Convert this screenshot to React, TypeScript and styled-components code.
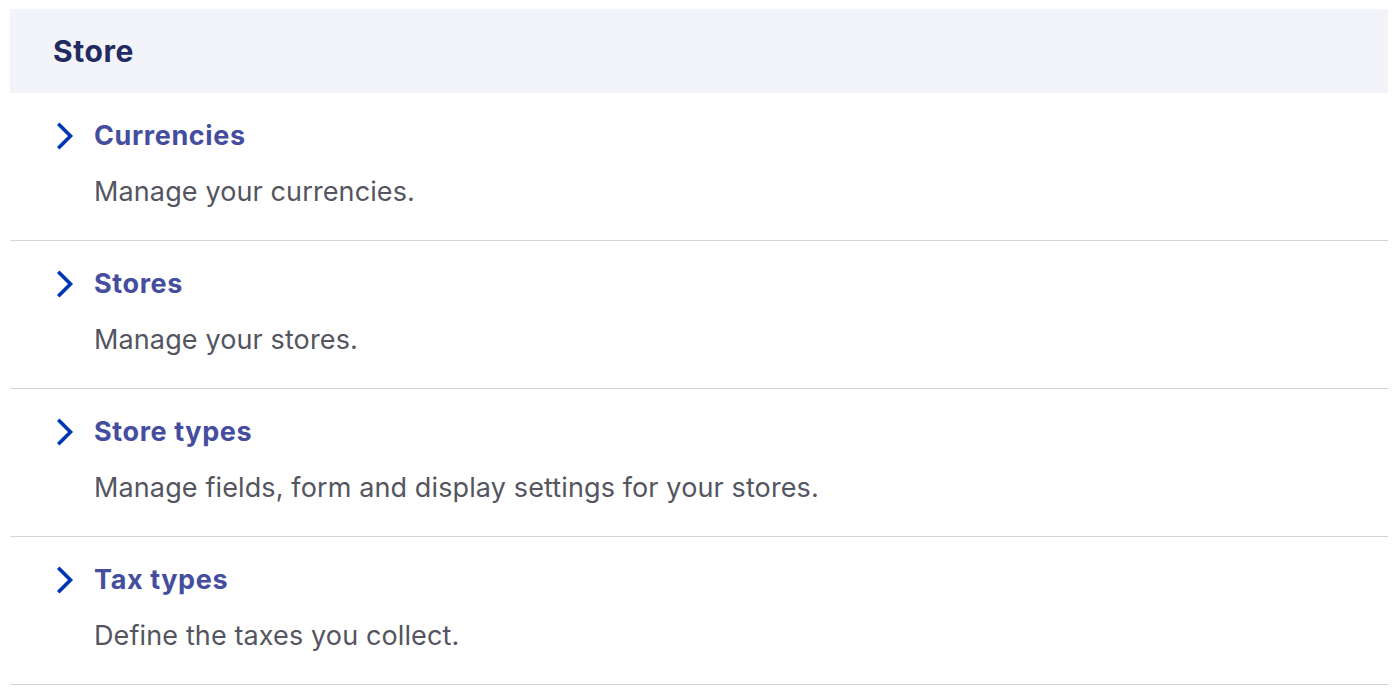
import React from 'react';
import styled, { createGlobalStyle } from 'styled-components';

const GlobalStyle = createGlobalStyle`
  body {
    margin: 0;
    background: #ffffff;
    font-family: Inter, "Noto Sans", sans-serif;
  }
`;

const Panel = styled.section`
  padding: 9px 12px 0 10px;
`;

const Header = styled.header`
  display: flex;
  align-items: center;
  height: 84px;
  padding-left: 43px;
  background: #f3f4f9;
`;

const Title = styled.h2`
  margin: 0;
  font-size: 30px;
  font-weight: 700;
  color: #222a62;
  letter-spacing: 0.6px;
`;

const List = styled.ul`
  margin: 0;
  padding: 0;
  list-style: none;
`;

const Item = styled.li`
  display: grid;
  grid-template-columns: 84px 1fr;
  grid-template-rows: auto auto;
  row-gap: 21px;
  padding: 26px 0 30px;
  border-bottom: 1px solid #d3d4d9;
`;

const Chevron = styled.span`
  display: flex;
  align-items: center;
  justify-content: flex-start;
  padding-left: 46px;
  color: #0036b1;
`;

const ItemLink = styled.a`
  font-size: 27px;
  line-height: 34px;
  font-weight: 700;
  color: #454e9e;
  text-decoration: none;
  letter-spacing: 0.6px;
`;

const Description = styled.p`
  grid-column: 2;
  margin: 0;
  font-size: 27px;
  line-height: 36px;
  color: #545560;
  letter-spacing: 0.12px;
`;

const items = [
  { title: 'Currencies', text: 'Manage your currencies.' },
  { title: 'Stores', text: 'Manage your stores.' },
  { title: 'Store types', text: 'Manage fields, form and display settings for your stores.' },
  { title: 'Tax types', text: 'Define the taxes you collect.' },
];

function ChevronIcon() {
  return (
    <svg width="20" height="28" viewBox="0 0 20 28" fill="none">
      <path d="M3.5 3 L14.5 14 L3.5 25" stroke="currentColor" strokeWidth="3.6" strokeLinecap="square" />
    </svg>
  );
}

export default function App() {
  return (
    <>
      <GlobalStyle />
      <Panel>
        <Header>
          <Title>Store</Title>
        </Header>
        <List>
          {items.map((item) => (
            <Item key={item.title}>
              <Chevron>
                <ChevronIcon />
              </Chevron>
              <ItemLink href="#">{item.title}</ItemLink>
              <Description>{item.text}</Description>
            </Item>
          ))}
        </List>
      </Panel>
    </>
  );
}
